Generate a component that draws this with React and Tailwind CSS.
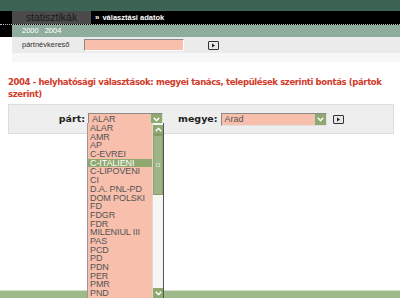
import React from "react";

const items = [
  "ALAR","AMR","AP","C-EVREI","C-ITALIENI","C-LIPOVENI","CI","D.A. PNL-PD","DOM POLSKI","FD","FDGR","FDR","MILENIUL III","PAS","PCD","PD","PDN","PER","PMR","PND",
];

function Chevron({ up = false }) {
  return (
    <svg width="7" height="5" viewBox="0 0 7 5" className="block">
      {up ? (
        <path d="M0.8 4.2 L3.5 1.3 L6.2 4.2" fill="none" stroke="#fff" strokeWidth="1.5" />
      ) : (
        <path d="M0.8 0.8 L3.5 3.7 L6.2 0.8" fill="none" stroke="#fff" strokeWidth="1.5" />
      )}
    </svg>
  );
}

function GoButton() {
  return (
    <div className="w-[11px] h-[9px] border border-[#333] rounded-[1px] bg-[#e6e6e6] flex items-center justify-center">
      <svg width="5" height="5" viewBox="0 0 5 5" className="block">
        <path d="M1 0.5 L4 2.5 L1 4.5 Z" fill="#222" />
      </svg>
    </div>
  );
}

function Select({ value, width }) {
  return (
    <div
      className="h-[13px] flex items-stretch bg-[#f8bfad] border border-t-[#8a8a8a] border-l-[#8a8a8a] border-b-[#e0e0e0] border-r-[#e0e0e0]"
      style={{ width }}
    >
      <div className="flex-1 text-[9px] leading-[11px] text-[#555] pl-[3px] font-['Liberation_Sans',sans-serif]">
        {value}
      </div>
      <div className="w-[12px] bg-[#8ea870] flex items-center justify-center border-l border-[#c9d6bd]">
        <Chevron />
      </div>
    </div>
  );
}

export default function App() {
  return (
    <div className="relative w-[400px] h-[298px] bg-white overflow-hidden font-['DejaVu_Sans',sans-serif]">
      <div className="h-[11px] bg-[#3d6354]" />
      <div className="h-[14px] flex bg-black border-b border-dotted border-[#bbbbbb]">
        <div className="w-[12px]" />
        <div className="w-[79px] bg-[#4b4b4b] flex items-center justify-center text-[10.5px] text-[#1a1a1a] font-['Liberation_Sans',sans-serif] leading-none">
          statisztikák
        </div>
        <div className="pl-[4px] flex items-center text-[7.5px] text-white font-bold font-['Liberation_Sans',sans-serif] leading-none">
          <span className="mr-[3px] text-[8px]">»</span>választási adatok
        </div>
      </div>
      <div className="h-[12px] flex">
        <div className="w-[12px] bg-black" />
        <div className="flex-1 bg-[#8fad9d] flex items-center pl-[10px] gap-[6px] text-[7.5px] text-white font-['Liberation_Sans',sans-serif] leading-none">
          <span>2000</span>
          <span>2004</span>
        </div>
      </div>
      <div className="ml-[12px] h-[16px] bg-[#ebebeb] flex items-center">
        <div className="w-[72px] pl-[10px] text-[7.5px] text-[#333] font-['Liberation_Sans',sans-serif] leading-none">
          pártnévkereső
        </div>
        <div className="w-[100px] h-[12px] bg-[#f8bfad] border border-t-[#8a8a8a] border-l-[#8a8a8a] border-b-[#ffffff] border-r-[#ffffff]" />
        <div className="ml-[24px]">
          <GoButton />
        </div>
      </div>
      <div className="ml-[12px] h-[9px] bg-[#f7f7f7]" />

      <div className="mt-[14px] ml-[8px] text-[8.5px] leading-[12px] font-bold text-[#d23a2a] tracking-[-0.38px]">
        <div className="whitespace-nowrap">2004 - helyhatósági választások: megyei tanács, települések szerinti bontás (pártok</div>
        <div className="whitespace-nowrap">szerint)</div>
      </div>

      <div className="mt-[4px] ml-[8px] w-[386px] h-[30px] bg-[#eeeeee] border border-[#dcdcdc] flex items-center">
        <div className="w-[76px] text-right text-[9.5px] font-bold text-[#222] leading-none">párt:</div>
        <div className="ml-[3px]">
          <Select value="ALAR" width={75} />
        </div>
        <div className="ml-[15px] text-[9.5px] font-bold text-[#222] leading-none">megye:</div>
        <div className="ml-[3px]">
          <Select value="Arad" width={106} />
        </div>
        <div className="ml-[6px]">
          <GoButton />
        </div>
      </div>

      <div className="absolute left-0 right-0 bottom-0 h-[8px] bg-[#9eba8b] border-t border-[#d2dfc6]" />

      <div className="absolute left-[87px] top-[123px] w-[77px] h-[176px] flex bg-[#f8bfad] border-l border-[#9a9a9a] border-r border-r-[#555]">
        <div className="flex-1 pt-[1px] font-['Liberation_Sans',sans-serif]">
          {items.map((it) => (
            <div
              key={it}
              className={
                "h-[8.7px] leading-[8.7px] text-[9px] pl-[2px] whitespace-nowrap tracking-[-0.1px] " +
                (it === "C-ITALIENI" ? "bg-[#8ea870] text-white" : "text-[#555]")
              }
            >
              {it}
            </div>
          ))}
        </div>
        <div className="w-[11px] flex flex-col bg-[#f6f7f2] border-l border-[#e8d4cc]">
          <div className="h-[10px] mt-[2px] bg-[#8ea870] flex items-center justify-center border-b border-[#7c9560]">
            <Chevron up />
          </div>
          <div className="h-[60px] bg-[#9db584] border border-[#8aa070] flex items-center justify-center">
            <div className="w-[4px] h-[4px] border border-[#c7d4b8]" />
          </div>
          <div className="flex-1" />
          <div className="h-[10px] mb-[1px] bg-[#8ea870] flex items-center justify-center">
            <Chevron />
          </div>
        </div>
      </div>
    </div>
  );
}
